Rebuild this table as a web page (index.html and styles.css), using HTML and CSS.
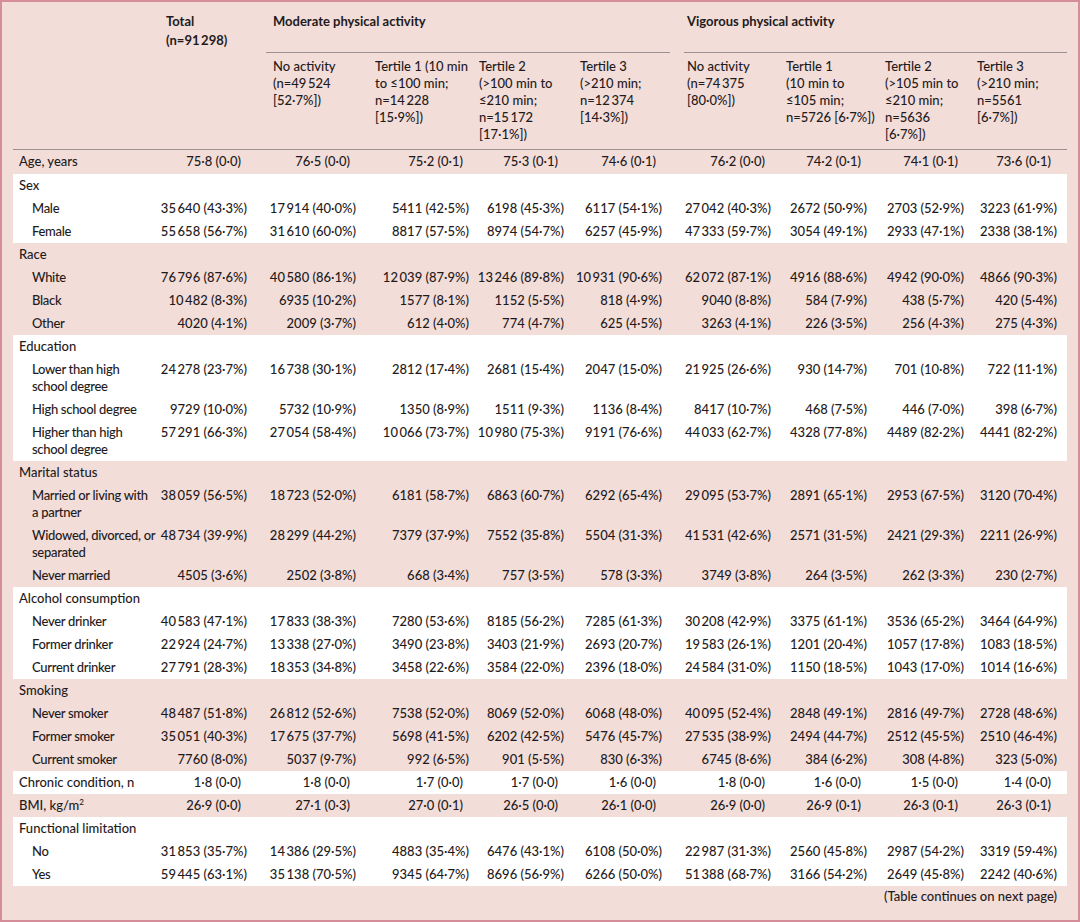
FILE: index.html
```html
<!DOCTYPE html>
<html lang="en">
<head>
<meta charset="utf-8">
<title>Baseline characteristics</title>
<link rel="stylesheet" href="styles.css">
</head>
<body>
<div class="page">
<table class="tbl">
<colgroup>
<col class="c0"><col class="c1"><col class="c2"><col class="c3"><col class="c4"><col class="c5"><col class="c6"><col class="c7"><col class="c8"><col class="c9">
</colgroup>
<thead>
<tr class="hr1">
<th></th>
<th class="tot">Total<br>(n=91&thinsp;298)</th>
<th colspan="4" class="grp"><div class="grp-line grp-mod">Moderate physical activity</div></th>
<th colspan="4" class="grp"><div class="grp-line grp-vig">Vigorous physical activity</div></th>
</tr>
<tr class="hr2">
<th></th>
<th></th>
<th>No activity<br>(n=49&thinsp;524<br>[52·7%])</th>
<th>Tertile 1 (10 min<br>to ≤100 min;<br>n=14&thinsp;228<br>[15·9%])</th>
<th>Tertile 2<br>(&gt;100 min to<br>≤210 min;<br>n=15&thinsp;172<br>[17·1%])</th>
<th>Tertile 3<br>(&gt;210 min;<br>n=12&thinsp;374<br>[14·3%])</th>
<th>No activity<br>(n=74&thinsp;375<br>[80·0%])</th>
<th>Tertile 1<br>(10 min to<br>≤105 min;<br>n=5726 [6·7%])</th>
<th>Tertile 2<br>(&gt;105 min to<br>≤210 min;<br>n=5636<br>[6·7%])</th>
<th>Tertile 3<br>(&gt;210 min;<br>n=5561<br>[6·7%])</th>
</tr>
</thead>
<tbody class="pink">
<tr class="mean first"><td class="lab">Age, years</td><td>75·8 (0·0)</td><td>76·5 (0·0)</td><td>75·2 (0·1)</td><td>75·3 (0·1)</td><td>74·6 (0·1)</td><td>76·2 (0·0)</td><td>74·2 (0·1)</td><td>74·1 (0·1)</td><td>73·6 (0·1)</td></tr>
</tbody>
<tbody class="white">
<tr><td class="lab" colspan="10">Sex</td></tr>
<tr><td class="sub">Male</td><td>35&thinsp;640 (43·3%)</td><td>17&thinsp;914 (40·0%)</td><td>5411 (42·5%)</td><td>6198 (45·3%)</td><td>6117 (54·1%)</td><td>27&thinsp;042 (40·3%)</td><td>2672 (50·9%)</td><td>2703 (52·9%)</td><td>3223 (61·9%)</td></tr>
<tr><td class="sub">Female</td><td>55&thinsp;658 (56·7%)</td><td>31&thinsp;610 (60·0%)</td><td>8817 (57·5%)</td><td>8974 (54·7%)</td><td>6257 (45·9%)</td><td>47&thinsp;333 (59·7%)</td><td>3054 (49·1%)</td><td>2933 (47·1%)</td><td>2338 (38·1%)</td></tr>
</tbody>
<tbody class="pink">
<tr><td class="lab" colspan="10">Race</td></tr>
<tr><td class="sub">White</td><td>76&thinsp;796 (87·6%)</td><td>40&thinsp;580 (86·1%)</td><td>12&thinsp;039 (87·9%)</td><td>13&thinsp;246 (89·8%)</td><td>10&thinsp;931 (90·6%)</td><td>62&thinsp;072 (87·1%)</td><td>4916 (88·6%)</td><td>4942 (90·0%)</td><td>4866 (90·3%)</td></tr>
<tr><td class="sub">Black</td><td>10&thinsp;482 (8·3%)</td><td>6935 (10·2%)</td><td>1577 (8·1%)</td><td>1152 (5·5%)</td><td>818 (4·9%)</td><td>9040 (8·8%)</td><td>584 (7·9%)</td><td>438 (5·7%)</td><td>420 (5·4%)</td></tr>
<tr><td class="sub">Other</td><td>4020 (4·1%)</td><td>2009 (3·7%)</td><td>612 (4·0%)</td><td>774 (4·7%)</td><td>625 (4·5%)</td><td>3263 (4·1%)</td><td>226 (3·5%)</td><td>256 (4·3%)</td><td>275 (4·3%)</td></tr>
</tbody>
<tbody class="white">
<tr><td class="lab" colspan="10">Education</td></tr>
<tr><td class="sub">Lower than high<br>school degree</td><td>24&thinsp;278 (23·7%)</td><td>16&thinsp;738 (30·1%)</td><td>2812 (17·4%)</td><td>2681 (15·4%)</td><td>2047 (15·0%)</td><td>21&thinsp;925 (26·6%)</td><td>930 (14·7%)</td><td>701 (10·8%)</td><td>722 (11·1%)</td></tr>
<tr><td class="sub">High school degree</td><td>9729 (10·0%)</td><td>5732 (10·9%)</td><td>1350 (8·9%)</td><td>1511 (9·3%)</td><td>1136 (8·4%)</td><td>8417 (10·7%)</td><td>468 (7·5%)</td><td>446 (7·0%)</td><td>398 (6·7%)</td></tr>
<tr><td class="sub">Higher than high<br>school degree</td><td>57&thinsp;291 (66·3%)</td><td>27&thinsp;054 (58·4%)</td><td>10&thinsp;066 (73·7%)</td><td>10&thinsp;980 (75·3%)</td><td>9191 (76·6%)</td><td>44&thinsp;033 (62·7%)</td><td>4328 (77·8%)</td><td>4489 (82·2%)</td><td>4441 (82·2%)</td></tr>
</tbody>
<tbody class="pink">
<tr><td class="lab" colspan="10">Marital status</td></tr>
<tr><td class="sub">Married or living with<br>a partner</td><td>38&thinsp;059 (56·5%)</td><td>18&thinsp;723 (52·0%)</td><td>6181 (58·7%)</td><td>6863 (60·7%)</td><td>6292 (65·4%)</td><td>29&thinsp;095 (53·7%)</td><td>2891 (65·1%)</td><td>2953 (67·5%)</td><td>3120 (70·4%)</td></tr>
<tr><td class="sub">Widowed, divorced, or<br>separated</td><td>48&thinsp;734 (39·9%)</td><td>28&thinsp;299 (44·2%)</td><td>7379 (37·9%)</td><td>7552 (35·8%)</td><td>5504 (31·3%)</td><td>41&thinsp;531 (42·6%)</td><td>2571 (31·5%)</td><td>2421 (29·3%)</td><td>2211 (26·9%)</td></tr>
<tr><td class="sub">Never married</td><td>4505 (3·6%)</td><td>2502 (3·8%)</td><td>668 (3·4%)</td><td>757 (3·5%)</td><td>578 (3·3%)</td><td>3749 (3·8%)</td><td>264 (3·5%)</td><td>262 (3·3%)</td><td>230 (2·7%)</td></tr>
</tbody>
<tbody class="white">
<tr><td class="lab" colspan="10">Alcohol consumption</td></tr>
<tr><td class="sub">Never drinker</td><td>40&thinsp;583 (47·1%)</td><td>17&thinsp;833 (38·3%)</td><td>7280 (53·6%)</td><td>8185 (56·2%)</td><td>7285 (61·3%)</td><td>30&thinsp;208 (42·9%)</td><td>3375 (61·1%)</td><td>3536 (65·2%)</td><td>3464 (64·9%)</td></tr>
<tr><td class="sub">Former drinker</td><td>22&thinsp;924 (24·7%)</td><td>13&thinsp;338 (27·0%)</td><td>3490 (23·8%)</td><td>3403 (21·9%)</td><td>2693 (20·7%)</td><td>19&thinsp;583 (26·1%)</td><td>1201 (20·4%)</td><td>1057 (17·8%)</td><td>1083 (18·5%)</td></tr>
<tr><td class="sub">Current drinker</td><td>27&thinsp;791 (28·3%)</td><td>18&thinsp;353 (34·8%)</td><td>3458 (22·6%)</td><td>3584 (22·0%)</td><td>2396 (18·0%)</td><td>24&thinsp;584 (31·0%)</td><td>1150 (18·5%)</td><td>1043 (17·0%)</td><td>1014 (16·6%)</td></tr>
</tbody>
<tbody class="pink">
<tr><td class="lab" colspan="10">Smoking</td></tr>
<tr><td class="sub">Never smoker</td><td>48&thinsp;487 (51·8%)</td><td>26&thinsp;812 (52·6%)</td><td>7538 (52·0%)</td><td>8069 (52·0%)</td><td>6068 (48·0%)</td><td>40&thinsp;095 (52·4%)</td><td>2848 (49·1%)</td><td>2816 (49·7%)</td><td>2728 (48·6%)</td></tr>
<tr><td class="sub">Former smoker</td><td>35&thinsp;051 (40·3%)</td><td>17&thinsp;675 (37·7%)</td><td>5698 (41·5%)</td><td>6202 (42·5%)</td><td>5476 (45·7%)</td><td>27&thinsp;535 (38·9%)</td><td>2494 (44·7%)</td><td>2512 (45·5%)</td><td>2510 (46·4%)</td></tr>
<tr><td class="sub">Current smoker</td><td>7760 (8·0%)</td><td>5037 (9·7%)</td><td>992 (6·5%)</td><td>901 (5·5%)</td><td>830 (6·3%)</td><td>6745 (8·6%)</td><td>384 (6·2%)</td><td>308 (4·8%)</td><td>323 (5·0%)</td></tr>
</tbody>
<tbody class="white">
<tr class="mean"><td class="lab">Chronic condition, n</td><td>1·8 (0·0)</td><td>1·8 (0·0)</td><td>1·7 (0·0)</td><td>1·7 (0·0)</td><td>1·6 (0·0)</td><td>1·8 (0·0)</td><td>1·6 (0·0)</td><td>1·5 (0·0)</td><td>1·4 (0·0)</td></tr>
</tbody>
<tbody class="pink">
<tr class="mean"><td class="lab">BMI, kg/m<sup class="sup">2</sup></td><td>26·9 (0·0)</td><td>27·1 (0·3)</td><td>27·0 (0·1)</td><td>26·5 (0·0)</td><td>26·1 (0·0)</td><td>26·9 (0·0)</td><td>26·9 (0·1)</td><td>26·3 (0·1)</td><td>26·3 (0·1)</td></tr>
</tbody>
<tbody class="white">
<tr><td class="lab" colspan="10">Functional limitation</td></tr>
<tr><td class="sub">No</td><td>31&thinsp;853 (35·7%)</td><td>14&thinsp;386 (29·5%)</td><td>4883 (35·4%)</td><td>6476 (43·1%)</td><td>6108 (50·0%)</td><td>22&thinsp;987 (31·3%)</td><td>2560 (45·8%)</td><td>2987 (54·2%)</td><td>3319 (59·4%)</td></tr>
<tr><td class="sub">Yes</td><td>59&thinsp;445 (63·1%)</td><td>35&thinsp;138 (70·5%)</td><td>9345 (64·7%)</td><td>8696 (56·9%)</td><td>6266 (50·0%)</td><td>51&thinsp;388 (68·7%)</td><td>3166 (54·2%)</td><td>2649 (45·8%)</td><td>2242 (40·6%)</td></tr>
</tbody>
</table>
<div class="cont">(Table continues on next page)</div>
</div>
</body>
</html>
```
FILE: styles.css
```css
html, body {
  margin: 0;
  padding: 0;
  background: #f3ddd9;
}

.page {
  width: 1080px;
  height: 922px;
  box-sizing: border-box;
  border: 2px solid #d58e99;
  background: #f3ddd9;
  padding: 10px 11px 0;
  font-family: "Lato", "Open Sans", sans-serif;
  font-size: 13px;
  font-weight: 500;
  color: #1f1b1c;
}

.tbl {
  width: 1054px;
  table-layout: fixed;
  border-collapse: separate;
  border-spacing: 0;
}

.c0 { width: 147px; }
.c1 { width: 107px; }
.c2 { width: 102px; }
.c3 { width: 104px; }
.c4 { width: 101px; }
.c5 { width: 107px; }
.c6 { width: 99px; }
.c7 { width: 99px; }
.c8 { width: 92px; }
.c9 { width: 96px; }

.tbl th {
  text-align: left;
  vertical-align: top;
  white-space: nowrap;
  padding: 0 0 0 6px;
}

.hr1 th {
  font-weight: 700;
  line-height: 19px;
}

.grp-line {
  border-bottom: 1px solid #9b9191;
  padding-bottom: 21px;
}

.grp-mod {
  margin-left: -7px;
  padding-left: 7px;
  margin-right: 11px;
}

.grp-vig {
  margin-left: -3px;
  padding-left: 3px;
}

.hr2 th {
  font-weight: 500;
  line-height: 17px;
  padding-top: 5px;
  padding-bottom: 6px;
  border-bottom: 1px solid #9b9191;
}

.tbl td {
  line-height: 17px;
  padding: 3px 0;
  vertical-align: top;
  text-align: right;
  white-space: nowrap;
}

.tbl .first td {
  padding-top: 3px;
  padding-bottom: 4px;
}

.tbl td.lab {
  text-align: left;
  padding-left: 6px;
}

.tbl td.sub {
  text-align: left;
  padding-left: 19px;
  letter-spacing: -0.3px;
}

.white { background: #ffffff; }
.pink { background: #f3ddd9; }

.tbl td:nth-child(2) { padding-right: 20px; }
.tbl td:nth-child(3) { padding-right: 13px; }
.tbl td:nth-child(4) { padding-right: 4px; }
.tbl td:nth-child(5) { padding-right: 10px; }
.tbl td:nth-child(6) { padding-right: 19px; }
.tbl td:nth-child(7) { padding-right: 9px; }
.tbl td:nth-child(8) { padding-right: 12px; }
.tbl td:nth-child(9) { padding-right: 7px; }
.tbl td:nth-child(10) { padding-right: 10px; }

.mean td:nth-child(2) { padding-right: 26px; }
.mean td:nth-child(3) { padding-right: 19px; }
.mean td:nth-child(4) { padding-right: 10px; }
.mean td:nth-child(5) { padding-right: 16px; }
.mean td:nth-child(6) { padding-right: 25px; }
.mean td:nth-child(7) { padding-right: 15px; }
.mean td:nth-child(8) { padding-right: 18px; }
.mean td:nth-child(9) { padding-right: 13px; }
.mean td:nth-child(10) { padding-right: 16px; }

.sup {
  font-size: 8px;
  line-height: 0;
  vertical-align: 5px;
}

.cont {
  text-align: right;
  padding-right: 10px;
  margin-top: 2px;
  line-height: 17px;
}
```
